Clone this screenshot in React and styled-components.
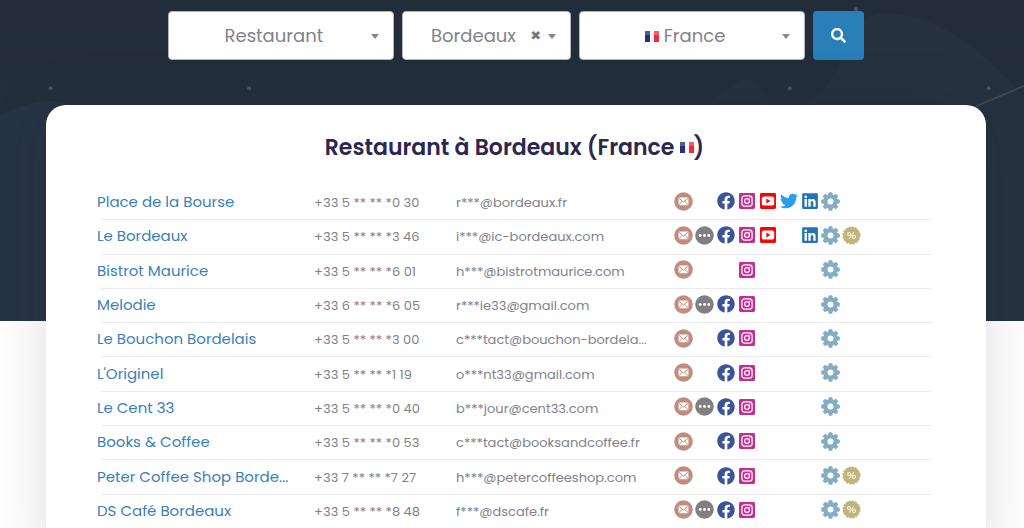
import React from 'react';
import styled, { createGlobalStyle } from 'styled-components';
import { FaFacebook, FaTwitter, FaLinkedin, FaSearch } from 'react-icons/fa';

const rows = [
  { name: 'Place de la Bourse', phone: '+33 5 ** ** *0 30', email: 'r***@bordeaux.fr', links: ['mail', 'facebook', 'instagram', 'youtube', 'twitter', 'linkedin', 'gear'] },
  { name: 'Le Bordeaux', phone: '+33 5 ** ** *3 46', email: 'i***@ic-bordeaux.com', links: ['mail', 'more', 'facebook', 'instagram', 'youtube', 'linkedin', 'gear', 'promo'] },
  { name: 'Bistrot Maurice', phone: '+33 5 ** ** *6 01', email: 'h***@bistrotmaurice.com', links: ['mail', 'instagram', 'gear'] },
  { name: 'Melodie', phone: '+33 6 ** ** *6 05', email: 'r***ie33@gmail.com', links: ['mail', 'more', 'facebook', 'instagram', 'gear'] },
  { name: 'Le Bouchon Bordelais', phone: '+33 5 ** ** *3 00', email: 'c***tact@bouchon-bordela...', links: ['mail', 'facebook', 'instagram', 'gear'] },
  { name: "L'Originel", phone: '+33 5 ** ** *1 19', email: 'o***nt33@gmail.com', links: ['mail', 'facebook', 'instagram', 'gear'] },
  { name: 'Le Cent 33', phone: '+33 5 ** ** *0 40', email: 'b***jour@cent33.com', links: ['mail', 'more', 'facebook', 'instagram', 'gear'] },
  { name: 'Books & Coffee', phone: '+33 5 ** ** *0 53', email: 'c***tact@booksandcoffee.fr', links: ['mail', 'facebook', 'instagram', 'gear'] },
  { name: 'Peter Coffee Shop Borde...', phone: '+33 7 ** ** *7 27', email: 'h***@petercoffeeshop.com', links: ['mail', 'facebook', 'instagram', 'gear', 'promo'] },
  { name: 'DS Café Bordeaux', phone: '+33 5 ** ** *8 48', email: 'f***@dscafe.fr', links: ['mail', 'more', 'facebook', 'instagram', 'gear', 'promo'] },
];

const slots = ['mail', 'more', 'facebook', 'instagram', 'youtube', 'twitter', 'linkedin', 'gear', 'promo'];

const MailIcon = () => (
  <svg width="19" height="19" viewBox="0 0 19 19">
    <circle cx="9.5" cy="9.5" r="9.3" fill="#c08c80" />
    <rect x="4.6" y="5.6" width="9.8" height="7.6" rx="0.8" fill="#fff" />
    <path d="M4.8 6.2 9.5 10l4.7-3.8M4.8 12.9l3.3-3.6M14.2 12.9l-3.3-3.6" fill="none" stroke="#c08c80" strokeWidth="1" />
  </svg>
);

const MoreIcon = () => (
  <svg width="19" height="19" viewBox="0 0 19 19">
    <circle cx="9.5" cy="9.5" r="9.3" fill="#808083" />
    <circle cx="5.2" cy="9.5" r="1.4" fill="#fff" />
    <circle cx="9.5" cy="9.5" r="1.4" fill="#fff" />
    <circle cx="13.8" cy="9.5" r="1.4" fill="#fff" />
  </svg>
);

const InstagramIcon = () => (
  <svg width="16" height="16" viewBox="0 0 16 16">
    <rect width="16" height="16" rx="1.4" fill="#c32f90" />
    <rect x="2.9" y="2.9" width="10.2" height="10.2" rx="2.6" fill="none" stroke="#fff" strokeWidth="1.2" />
    <circle cx="8" cy="8" r="2.4" fill="none" stroke="#fff" strokeWidth="1.2" />
    <circle cx="10.9" cy="5.1" r="0.7" fill="#fff" />
  </svg>
);

const YoutubeIcon = () => (
  <svg width="16" height="16" viewBox="0 0 16 16">
    <rect width="16" height="16" rx="1.4" fill="#f90505" />
    <rect x="1.8" y="3.4" width="12.4" height="9.2" rx="2.2" fill="#fff" />
    <path d="M6.3 5.5v5l4.2-2.5z" fill="#f90505" />
  </svg>
);

const teeth = [0, 45, 90, 135, 180, 225, 270, 315];

const GearIcon = () => (
  <svg width="19" height="19" viewBox="0 0 19 19">
    {teeth.map((angle) => (
      <path key={angle} d="M7 3.4 7.8.2h3.4L12 3.4z" fill="#83adc2" transform={`rotate(${angle} 9.5 9.5)`} />
    ))}
    <circle cx="9.5" cy="9.5" r="5.1" fill="none" stroke="#83adc2" strokeWidth="4.2" />
  </svg>
);

const PromoIcon = () => (
  <svg width="19" height="19" viewBox="0 0 19 19">
    <circle cx="9.5" cy="9.5" r="8.2" fill="#beb47e" />
    <circle cx="9.5" cy="9.5" r="8.3" fill="none" stroke="#beb47e" strokeWidth="1.6" strokeDasharray="2.2 1.06" />
    <g fill="none" stroke="#fbeee2" strokeWidth="1.1">
      <circle cx="7" cy="8.1" r="1.5" />
      <circle cx="12" cy="10.9" r="1.5" />
      <path d="M11.7 6.2 7.3 12.8" />
    </g>
  </svg>
);

const Flag = () => (
  <FlagSvg width="14" height="11" viewBox="0 0 14 11" aria-hidden="true">
    <rect width="5" height="11" fill="#26307c" />
    <rect width="5" height="4" fill="#4c5d9b" />
    <rect x="5" width="4" height="11" fill="#f7f5f7" />
    <rect x="9" width="5" height="11" fill="#ee2b3b" />
    <rect x="9" width="5" height="4" fill="#f35a63" />
  </FlagSvg>
);

const icons = {
  mail: { label: 'E-mail', node: <MailIcon /> },
  more: { label: 'Plus', node: <MoreIcon /> },
  facebook: { label: 'Facebook', node: <FaFacebook size={18} color="#3b5499" /> },
  instagram: { label: 'Instagram', node: <InstagramIcon /> },
  youtube: { label: 'YouTube', node: <YoutubeIcon /> },
  twitter: { label: 'Twitter', node: <FaTwitter size={18} color="#2a9df0" /> },
  linkedin: { label: 'LinkedIn', node: <FaLinkedin size={18} color="#2474b3" /> },
  gear: { label: 'Options', node: <GearIcon /> },
  promo: { label: 'Promotion', node: <PromoIcon /> },
};

function Backdrop() {
  return (
    <BackdropSvg viewBox="0 0 1024 320" preserveAspectRatio="xMidYMin slice" aria-hidden="true">
      <path d="M0 116C22 105 42 99 58 101C90 108 110 130 150 150V330H0Z" fill="#273444" />
      <path d="M700 108C725 92 735 78 748 79C762 82 760 100 780 106C850 108 835 13 884 13C945 16 985 55 1024 98V330H700Z" fill="#25313e" />
      <path d="M972 107 1024 85" stroke="#3b4656" strokeWidth="2" />
      <g fill="#46516d">
        <circle cx="52" cy="88" r="2" />
        <circle cx="250" cy="88" r="2" />
        <circle cx="789" cy="88" r="2" />
        <circle cx="987" cy="88" r="2" />
        <circle cx="855" cy="9" r="2" />
      </g>
    </BackdropSvg>
  );
}

function Search() {
  return (
    <SearchForm onSubmit={(e) => e.preventDefault()}>
      <Field>
        <Select aria-label="Catégorie" defaultValue="Restaurant">
          <option>Restaurant</option>
        </Select>
        <Caret />
      </Field>
      <Field $clearable>
        <Select aria-label="Ville" defaultValue="Bordeaux">
          <option>Bordeaux</option>
        </Select>
        <Clear type="button" aria-label="Effacer">✖</Clear>
        <Caret />
      </Field>
      <Field>
        <Flag />
        <Select aria-label="Pays" defaultValue="France">
          <option>France</option>
        </Select>
        <Caret />
      </Field>
      <SearchButton type="submit" aria-label="Rechercher">
        <FaSearch size={15} />
      </SearchButton>
    </SearchForm>
  );
}

function App() {
  return (
    <Page>
      <GlobalStyle />
      <Hero>
        <Backdrop />
        <Search />
      </Hero>
      <Card>
        <Title>
          Restaurant à Bordeaux (France <Flag />)
        </Title>
        <Table>
          <colgroup>
            <Col $width="26%" />
            <Col $width="17%" />
            <Col $width="26%" />
            <Col $width="31%" />
          </colgroup>
          <tbody>
            {rows.map((row) => (
              <Row key={row.name}>
                <Cell><NameLink href="#">{row.name}</NameLink></Cell>
                <Cell>{row.phone}</Cell>
                <Cell>{row.email}</Cell>
                <Cell>
                  <Links>
                    {slots.map((slot) => (
                      <Slot key={slot}>
                        {row.links.includes(slot) && (
                          <IconLink href="#" aria-label={icons[slot].label}>{icons[slot].node}</IconLink>
                        )}
                      </Slot>
                    ))}
                  </Links>
                </Cell>
              </Row>
            ))}
          </tbody>
        </Table>
      </Card>
    </Page>
  );
}

export default App;

const GlobalStyle = createGlobalStyle`
  * {
    box-sizing: border-box;
  }
  html {
    scrollbar-width: none;
  }
  body {
    margin: 0;
    background: #fff;
    font-family: Poppins, Inter, sans-serif;
    color: #82818b;
  }
`;

const Page = styled.div`
  min-height: 100vh;
  overflow: hidden;
`;

const Hero = styled.header`
  position: relative;
  height: 321px;
  padding: 11px 0 0 8px;
  background: linear-gradient(#222d39, #242f3c 110px, #283546);
`;

const BackdropSvg = styled.svg`
  position: absolute;
  inset: 0;
  width: 100%;
  height: 100%;
`;

const SearchForm = styled.form`
  position: relative;
  display: grid;
  grid-template-columns: 4fr 3fr 4fr 51px;
  gap: 8px;
  max-width: 696px;
  margin: 0 auto;
`;

const FlagSvg = styled.svg`
  flex: none;
  vertical-align: 2px;
`;

const Field = styled.div`
  position: relative;
  display: flex;
  align-items: center;
  justify-content: center;
  gap: 5px;
  height: 49px;
  padding: 0 ${(props) => (props.$clearable ? '32px' : '20px')} 0 6px;
  background: #fff;
  border: 1px solid #b4b5bd;
  border-radius: 4px;

  ${FlagSvg} {
    margin-top: 2px;
  }
`;

const Select = styled.select`
  appearance: none;
  field-sizing: content;
  padding: 0;
  border: 0;
  background: none;
  color: #82818b;
  font: 400 18px/28px Poppins, Inter, sans-serif;
`;

const Caret = styled.span`
  position: absolute;
  top: 22px;
  right: 14px;
  border: 4px solid transparent;
  border-top: 5px solid #85858a;
  border-bottom: 0;
  pointer-events: none;
`;

const Clear = styled.button`
  position: absolute;
  top: 14px;
  right: 29px;
  padding: 0;
  border: 0;
  background: none;
  color: #77777c;
  font: 13px/20px "DejaVu Sans", sans-serif;
`;

const SearchButton = styled.button`
  display: flex;
  align-items: center;
  justify-content: center;
  padding: 0;
  border: 0;
  border-radius: 4px;
  background: #2980b9;
  color: #fff;
`;

const Card = styled.main`
  position: relative;
  width: calc(100% - 84px);
  max-width: 940px;
  margin: -216px auto 0;
  left: 4px;
  padding: 27px 54px 40px 51px;
  background: #fff;
  border-radius: 20px;
  box-shadow: 0 0 56px rgba(40, 40, 60, 0.15);
`;

const Title = styled.h1`
  margin: 0 0 22px;
  color: #2b2751;
  font-size: 22px;
  font-weight: 600;
  line-height: 32px;
  text-align: center;
`;

const Table = styled.table`
  width: 100%;
  height: 343px;
  table-layout: fixed;
  border-collapse: collapse;
`;

const Col = styled.col`
  width: ${(props) => props.$width};
`;

const Row = styled.tr`
  background: linear-gradient(#e9e9eb, #e9e9eb) right bottom / calc(100% - 4px) 1px no-repeat;
`;

const Cell = styled.td`
  padding: 0;
  font-size: 13px;
  white-space: nowrap;
`;

const NameLink = styled.a`
  display: block;
  padding-bottom: 2px;
  color: #3a7fb8;
  font-size: 15px;
  line-height: 22px;
  text-decoration: none;
`;

const Links = styled.div`
  display: grid;
  grid-template-columns: repeat(9, 21px);
  height: 24px;
  padding-bottom: 4px;
`;

const Slot = styled.span`
  display: flex;
  align-items: center;
  justify-content: center;
`;

const IconLink = styled.a`
  display: flex;
`;
